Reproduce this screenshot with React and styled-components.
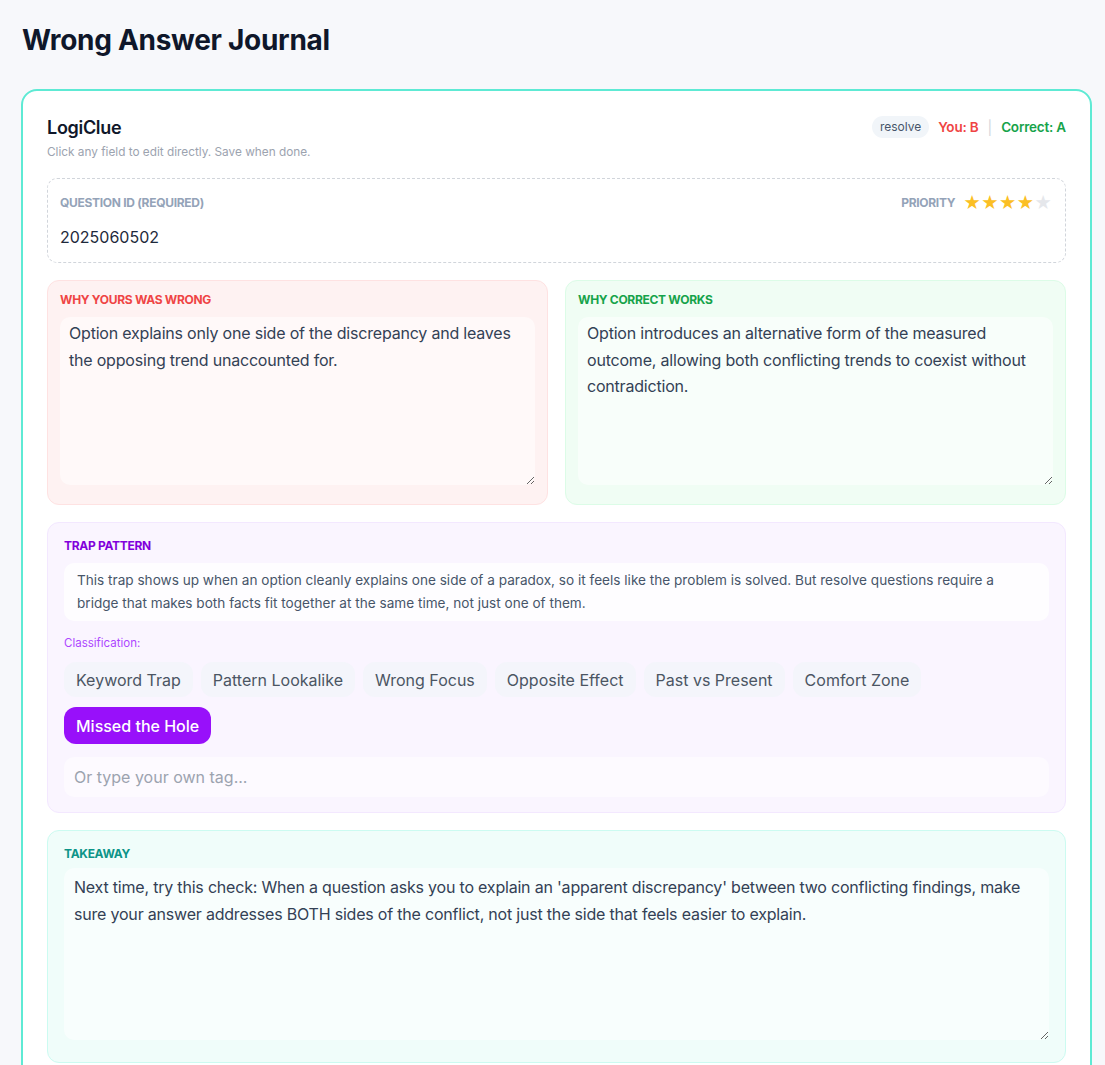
import styled, { createGlobalStyle } from "styled-components";

const GlobalStyle = createGlobalStyle`
  * { box-sizing: border-box; }
  body {
    margin: 0;
    background: #f7f8fb;
    font-family: Inter, "Noto Sans", sans-serif;
    color: #1e293b;
  }
`;

const tags = [
  "Keyword Trap",
  "Pattern Lookalike",
  "Wrong Focus",
  "Opposite Effect",
  "Past vs Present",
  "Comfort Zone",
  "Missed the Hole",
];

export default function App() {
  const priority = 4;
  return (
    <Page>
      <GlobalStyle />
      <Title>Wrong Answer Journal</Title>
      <Card>
        <Header>
          <div>
            <CardTitle>LogiClue</CardTitle>
            <Hint>Click any field to edit directly. Save when done.</Hint>
          </div>
          <Meta>
            <TypePill>resolve</TypePill>
            <Answer $tone="#ef4444">You: B</Answer>
            <Divider>|</Divider>
            <Answer $tone="#16a34a">Correct: A</Answer>
          </Meta>
        </Header>

        <IdBox>
          <IdTop>
            <Label $color="#94a3b8">Question ID (required)</Label>
            <Priority>
              <Label $color="#94a3b8">Priority</Label>
              <Stars>
                {[1, 2, 3, 4, 5].map((n) => (
                  <Star key={n} $on={n <= priority}>★</Star>
                ))}
              </Stars>
            </Priority>
          </IdTop>
          <IdValue>2025060502</IdValue>
        </IdBox>

        <Columns>
          <Panel $bg="#fef2f2" $border="#fee2e2" $pad="12px 12px 19px">
            <Label $color="#ef4444">Why yours was wrong</Label>
            <Area
              $height="168px"
              defaultValue="Option explains only one side of the discrepancy and leaves the opposing trend unaccounted for."
            />
          </Panel>
          <Panel $bg="#f0fdf4" $border="#dcfce7" $pad="12px 12px 19px">
            <Label $color="#16a34a">Why correct works</Label>
            <Area
              $height="168px"
              defaultValue="Option introduces an alternative form of the measured outcome, allowing both conflicting trends to coexist without contradiction."
            />
          </Panel>
        </Columns>

        <Panel $bg="#faf5ff" $border="#f3e8ff" $pad="16px 16px 15px">
          <Label $color="#8200db">Trap pattern</Label>
          <Description>
            This trap shows up when an option cleanly explains one side of a
            paradox, so it feels like the problem is solved. But resolve
            questions require a bridge that makes both facts fit together at the
            same time, not just one of them.
          </Description>
          <SubLabel>Classification:</SubLabel>
          <Chips>
            {tags.map((t) => (
              <Chip key={t} $active={t === "Missed the Hole"}>
                {t}
              </Chip>
            ))}
          </Chips>
          <TagInput placeholder="Or type your own tag..." />
        </Panel>

        <Panel $bg="#f0fdfa" $border="#ccfbf1" $pad="16px 16px 22px">
          <Label $color="#0d9488">Takeaway</Label>
          <Area
            $height="172px"
            $top="7px"
            $inner="6px 10px"
            defaultValue="Next time, try this check: When a question asks you to explain an 'apparent discrepancy' between two conflicting findings, make sure your answer addresses BOTH sides of the conflict, not just the side that feels easier to explain."
          />
        </Panel>
      </Card>
    </Page>
  );
}

const Page = styled.div`
  padding: 22px 13px 0 21px;
  min-height: 100vh;
`;

const Title = styled.h1`
  margin: 0 0 31px 1px;
  font-size: 28px;
  line-height: 36px;
  font-weight: 700;
  letter-spacing: -0.3px;
  color: #0f172a;
`;

const Card = styled.section`
  background: #fff;
  border: 2px solid #5eead4;
  border-radius: 16px;
  padding: 24px;
  display: flex;
  flex-direction: column;
  gap: 17px;
`;

const Header = styled.div`
  display: flex;
  justify-content: space-between;
  align-items: flex-start;
  margin-bottom: 1px;
`;

const CardTitle = styled.div`
  font-size: 18px;
  line-height: 26px;
  font-weight: 600;
  color: #0f172a;
  letter-spacing: -0.3px;
`;

const Hint = styled.div`
  margin-top: 3px;
  font-size: 11.8px;
  line-height: 16px;
  color: #9ca3af;
`;

const Meta = styled.div`
  display: flex;
  align-items: center;
  gap: 9px;
  margin-top: 1px;
`;

const TypePill = styled.span`
  background: #f1f5f9;
  color: #475569;
  font-size: 12px;
  line-height: 22px;
  padding: 0 8px;
  border-radius: 11px;
`;

const Answer = styled.span`
  color: ${(p) => p.$tone};
  font-size: 13.5px;
  font-weight: 600;
  letter-spacing: -0.2px;
`;

const Divider = styled.span`
  color: #d1d5db;
  font-size: 14px;
`;

const Label = styled.div`
  color: ${(p) => p.$color};
  font-size: 12px;
  line-height: 14px;
  font-weight: 700;
  text-transform: uppercase;
  letter-spacing: -0.3px;
`;

const IdBox = styled.div`
  border: 1px dashed #d1d5db;
  border-radius: 10px;
  padding: 17px 13px 13px 12px;
`;

const IdTop = styled.div`
  display: flex;
  justify-content: space-between;
  align-items: center;
  height: 14px;
`;

const Priority = styled.div`
  display: flex;
  align-items: center;
  gap: 8px;
`;

const Stars = styled.div`
  display: flex;
`;

const Star = styled.span`
  color: ${(p) => (p.$on ? "#fbbf24" : "#e5e7eb")};
  font-size: 17px;
  line-height: 18px;
`;

const IdValue = styled.div`
  margin-top: 15px;
  font-size: 16px;
  line-height: 24px;
  color: #1e293b;
`;

const Columns = styled.div`
  display: grid;
  grid-template-columns: 1fr 1fr;
  gap: 17px;
`;

const Panel = styled.div`
  background: ${(p) => p.$bg};
  border: 1px solid ${(p) => p.$border};
  border-radius: 12px;
  padding: ${(p) => p.$pad};
  display: flex;
  flex-direction: column;
`;

const Area = styled.textarea`
  margin-top: ${(p) => p.$top || "10px"};
  height: ${(p) => p.$height};
  width: 100%;
  resize: vertical;
  border: none;
  outline: none;
  border-radius: 10px;
  background: rgba(255, 255, 255, 0.55);
  padding: ${(p) => p.$inner || "3px 9px"};
  font-family: inherit;
  font-size: 16px;
  line-height: 26.5px;
  color: #334155;
  letter-spacing: -0.2px;
`;

const Description = styled.div`
  margin-top: 10px;
  background: rgba(255, 255, 255, 0.8);
  border-radius: 10px;
  padding: 6px 13px;
  font-size: 13.6px;
  line-height: 23px;
  color: #475569;
`;

const SubLabel = styled.div`
  margin-top: 14px;
  font-size: 11.5px;
  line-height: 16px;
  color: #ad46ff;
`;

const Chips = styled.div`
  margin-top: 11px;
  display: flex;
  flex-wrap: wrap;
  gap: 10px 8px;
`;

const Chip = styled.span`
  font-size: 16px;
  line-height: 22px;
  padding: ${(p) => (p.$active ? "8px 12px 7px" : "7px 12px 6px")};
  border-radius: 12px;
  background: ${(p) => (p.$active ? "#9810fa" : "rgba(241, 245, 249, 0.7)")};
  color: ${(p) => (p.$active ? "#fff" : "#4b5563")};
  font-weight: ${(p) => (p.$active ? 500 : 400)};
`;

const TagInput = styled.input`
  margin-top: 13px;
  height: 40px;
  width: 100%;
  border: none;
  outline: none;
  border-radius: 10px;
  background: rgba(255, 255, 255, 0.5);
  padding: 0 10px;
  font-family: inherit;
  font-size: 16px;
  color: #334155;

  &::placeholder {
    color: #9ca3af;
  }
`;
